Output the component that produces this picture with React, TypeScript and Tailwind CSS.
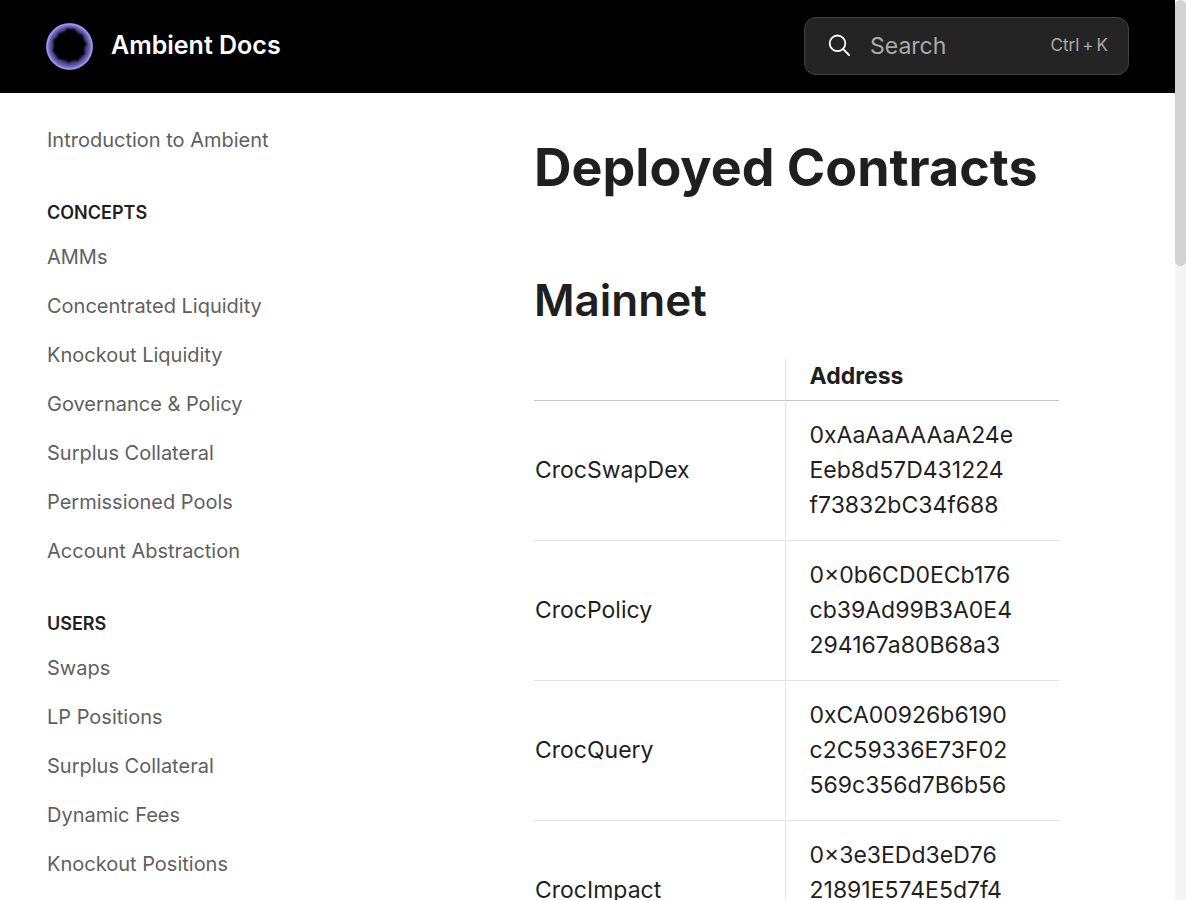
import React from "react";

type NavGroup = { title: string; links: string[] };

const groups: NavGroup[] = [
  {
    title: "CONCEPTS",
    links: [
      "AMMs",
      "Concentrated Liquidity",
      "Knockout Liquidity",
      "Governance & Policy",
      "Surplus Collateral",
      "Permissioned Pools",
      "Account Abstraction",
    ],
  },
  {
    title: "USERS",
    links: ["Swaps", "LP Positions", "Surplus Collateral", "Dynamic Fees", "Knockout Positions"],
  },
];

const contracts = [
  { name: "CrocSwapDex", address: ["0xAaAaAAAaA24e", "Eeb8d57D431224", "f73832bC34f688"] },
  { name: "CrocPolicy", address: ["0×0b6CD0ECb176", "cb39Ad99B3A0E4", "294167a80B68a3"] },
  { name: "CrocQuery", address: ["0xCA00926b6190", "c2C59336E73F02", "569c356d7B6b56"] },
  { name: "CrocImpact", address: ["0×3e3EDd3eD76", "21891E574E5d7f4", "7b1f30A994c0D0"] },
];

function Logo() {
  return (
    <svg viewBox="0 0 47 47" className="size-[47px] shrink-0" aria-hidden="true">
      <defs>
        <radialGradient id="ring" cx="50%" cy="50%" r="50%">
          <stop offset="0.6" stopColor="#37326a" />
          <stop offset="0.8" stopColor="#5a529c" />
          <stop offset="0.89" stopColor="#7b71c6" />
          <stop offset="0.95" stopColor="#a398ec" />
          <stop offset="1" stopColor="#857ad4" />
        </radialGradient>
        <filter id="soft" x="-20%" y="-20%" width="140%" height="140%">
          <feGaussianBlur stdDeviation="1" />
        </filter>
      </defs>
      <circle cx="23.5" cy="23.5" r="23.5" fill="url(#ring)" />
      <path
        d="M13 10 L18 9 L21 5.500 L29 6 L32 10 L37 12 L38 17 L41 21 L38 25 L39 31 L35 34 L32 38 L27 37.500 L23 40 L18 37 L12 36 L10 32 L6.500 28 L8 23 L7 17 L11 14 Z"
        fill="#000"
        filter="url(#soft)"
      />
    </svg>
  );
}

function SideLink({ label }: { label: string }) {
  return (
    <li>
      <a href="#" className="flex h-[49px] items-center text-[20px] text-[#5f5f5f]">
        {label}
      </a>
    </li>
  );
}

export default function App() {
  return (
    <div className="flex h-screen bg-white font-['Inter',sans-serif] text-[#1f1f1f]">
      <div className="min-w-0 flex-1 overflow-y-auto [scrollbar-width:none]">
        <header className="flex h-[93px] items-center justify-between bg-black px-[46px] pb-px">
          <a href="#" className="flex items-center gap-[18px] text-[25px] font-semibold text-white">
            <Logo />
            Ambient Docs
          </a>
          <button
            type="button"
            className="flex h-[58px] w-[325px] items-center rounded-xl border border-[#434343] bg-[#242424] pr-5 pl-[18px] text-[#aaaaaa]"
          >
            <svg
              viewBox="0 0 30 30"
              className="size-[30px] text-white"
              fill="none"
              stroke="currentColor"
              strokeWidth="1.8"
              strokeLinecap="round"
              aria-hidden="true"
            >
              <circle cx="14.5" cy="12.3" r="7.8" />
              <path d="M20 17.900 L26 24" />
            </svg>
            <span className="ml-4 pl-px text-[23px]">Search</span>
            <span className="ml-auto flex gap-[3px] text-[17px]">
              <kbd className="font-[inherit]">Ctrl</kbd>
              <span>+</span>
              <kbd className="font-[inherit]">K</kbd>
            </span>
          </button>
        </header>

        <div className="flex px-[46px]">
          <nav className="w-[488px] shrink-0 pt-[22px] pl-px" aria-label="Documentation">
            <ul>
              <SideLink label="Introduction to Ambient" />
            </ul>
            {groups.map((group) => (
              <section key={group.title}>
                <h2 className="mt-[37px] mb-[7px] text-[18px] leading-6 font-semibold">{group.title}</h2>
                <ul>
                  {group.links.map((label) => (
                    <SideLink key={label} label={label} />
                  ))}
                </ul>
              </section>
            ))}
          </nav>

          <main className="min-w-0 flex-1 pt-[43px] pr-[70px]">
            <h1 className="text-[52px] leading-[64px] font-bold whitespace-nowrap">Deployed Contracts</h1>
            <h2 className="mt-[72px] text-[44px] leading-[56px] font-semibold">Mainnet</h2>
            <table className="mt-[31px] w-full table-fixed border-collapse text-left text-[23px] leading-[35px]">
              <thead>
                <tr className="border-b border-[#c4c4c4]">
                  <th className="w-[251px] border-r border-[#e6e6e6]" aria-label="Contract" />
                  <th className="h-[41px] px-6 py-0 align-top font-bold">Address</th>
                </tr>
              </thead>
              <tbody>
                {contracts.map((row) => (
                  <tr key={row.name} className="border-b border-[#e3e3e3]">
                    <td className="border-r border-[#e6e6e6] py-[17px] pl-px">{row.name}</td>
                    <td className="px-6 py-[17px]">
                      {row.address.map((line) => (
                        <span key={line} className="block">
                          {line}
                        </span>
                      ))}
                    </td>
                  </tr>
                ))}
              </tbody>
            </table>
          </main>
        </div>
      </div>
      <div className="w-[11px] shrink-0 bg-[#f5f5f5]" aria-hidden="true">
        <div className="h-[29.6%] rounded-full bg-[#d3d3d3]" />
      </div>
    </div>
  );
}
